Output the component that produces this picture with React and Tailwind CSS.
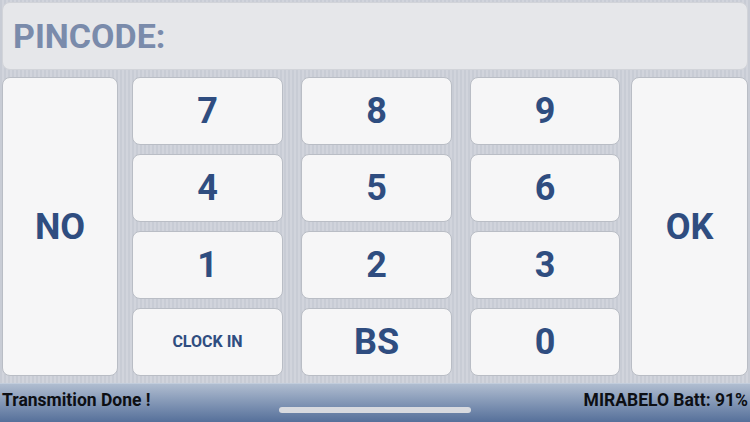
const ROWS = [
  ["7", "8", "9"],
  ["4", "5", "6"],
  ["1", "2", "3"],
  ["CLOCK IN", "BS", "0"],
];

const COLS = [
  "ml-[14px] w-[151px]",
  "ml-[18px] w-[151px]",
  "ml-[18px] w-[150px]",
];

function Key({ label, className = "" }) {
  const small = label === "CLOCK IN";
  return (
    <button
      className={
        "flex items-center justify-center rounded-[8px] border border-[#b9bdc5] bg-[#f6f6f7] font-bold text-[#2f4d80] " +
        (small ? "text-[16px] " : "text-[36px] ") +
        className
      }
    >
      {label}
    </button>
  );
}

export default function App() {
  return (
    <div
      className="flex h-[422px] w-[750px] flex-col overflow-hidden bg-[repeating-linear-gradient(90deg,#c8ccd5_0px,#c8ccd5_2px,#d1d4dc_2px,#d1d4dc_4px)]"
      style={{ fontFamily: "Roboto, 'Liberation Sans', sans-serif" }}
    >
      <div className="mx-[2px] mt-[2px] flex h-[68px] items-center rounded-[8px] border border-[#d2d4d9] bg-[#e6e7ea] pl-[10px]">
        <span className="text-[34px] font-bold text-[#7a8bab]">PINCODE:</span>
      </div>

      <div className="mt-[7px] flex h-[299px] pl-[2px]">
        <Key label="NO" className="h-[299px] w-[116px]" />
        {COLS.map((cls, c) => (
          <div key={c} className={"flex flex-col gap-[9px] " + cls}>
            {ROWS.map((row) => (
              <Key key={row[c]} label={row[c]} className="h-[68px] w-full" />
            ))}
          </div>
        ))}
        <Key label="OK" className="ml-[11px] h-[299px] w-[117px]" />
      </div>

      <div className="relative mt-[7px] flex h-[39px] items-center justify-between border-t border-[#c2cddc] bg-gradient-to-b from-[#b0bdd0] to-[#56709a] px-[2px] pb-[5px]">
        <span className="text-[17.5px] font-bold text-[#0d0f14]">Transmition Done !</span>
        <span className="text-[17.5px] font-bold text-[#0d0f14]">MIRABELO Batt: 91%</span>
        <div className="absolute left-[279px] top-[23px] h-[6px] w-[192px] rounded-full bg-[#d8dadf]" />
      </div>
    </div>
  );
}
